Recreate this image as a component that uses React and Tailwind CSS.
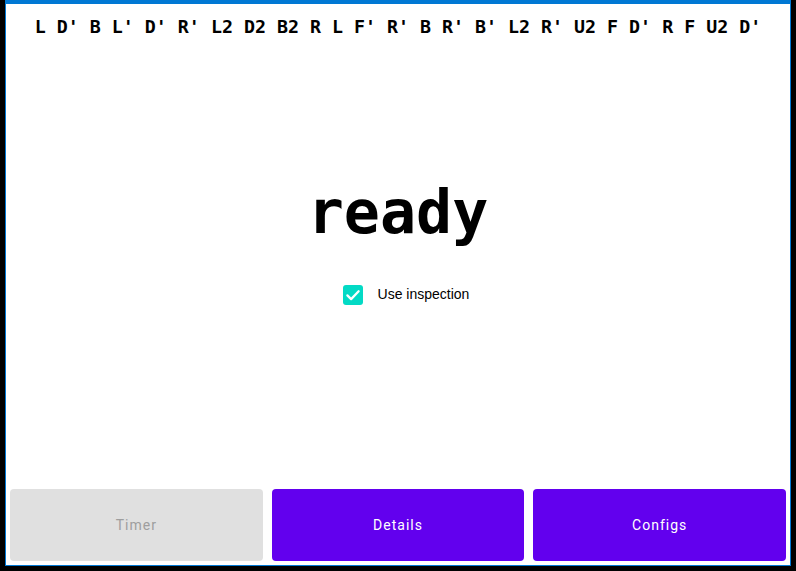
const scramble =
  "L D' B L' D' R' L2 D2 B2 R L F' R' B R' B' L2 R' U2 F D' R F U2 D'";

function TabButton({ label, active }) {
  return (
    <button
      className={
        active
          ? "flex-1 h-[72px] rounded-[4px] bg-[#e0e0e0] text-[#9e9e9e] text-[14px] tracking-[1px]"
          : "flex-1 h-[72px] rounded-[4px] bg-[#6200ee] text-white text-[14px] tracking-[1px]"
      }
      style={{ fontFamily: "Roboto, 'Liberation Sans', sans-serif" }}
    >
      {label}
    </button>
  );
}

export default function App() {
  return (
    <div className="w-[796px] h-[571px] bg-black pl-[5px] pr-[5px] pb-[5px]">
      <div className="h-full flex flex-col bg-white border border-[#0078d4] border-t-4">
        <div
          className="pt-[13px] text-center text-[18.3px] font-bold leading-[20px] text-black whitespace-pre"
          style={{ fontFamily: "'DejaVu Sans Mono', monospace" }}
        >
          {scramble}
        </div>

        <div className="flex-1 flex flex-col items-center">
          <div
            className="mt-[144px] text-[60px] font-bold leading-[62px] text-black"
            style={{ fontFamily: "'DejaVu Sans Mono', monospace" }}
          >
            ready
          </div>
          <label
            className="mt-[41px] ml-[16px] flex items-center gap-[15px] text-[14px] text-black"
            style={{ fontFamily: "'Liberation Sans', Arial, sans-serif" }}
          >
            <span className="w-[20px] h-[20px] rounded-[3px] bg-[#03dac5] flex items-center justify-center">
              <svg width="18" height="18" viewBox="0 0 24 24" fill="none">
                <path
                  d="M4.5 12.5l5 5L19.5 7"
                  stroke="white"
                  strokeWidth="3"
                  strokeLinecap="round"
                  strokeLinejoin="round"
                />
              </svg>
            </span>
            Use inspection
          </label>
        </div>

        <div className="flex gap-[9px] px-[4px] pb-[4px]">
          <TabButton label="Timer" active />
          <TabButton label="Details" />
          <TabButton label="Configs" />
        </div>
      </div>
    </div>
  );
}
